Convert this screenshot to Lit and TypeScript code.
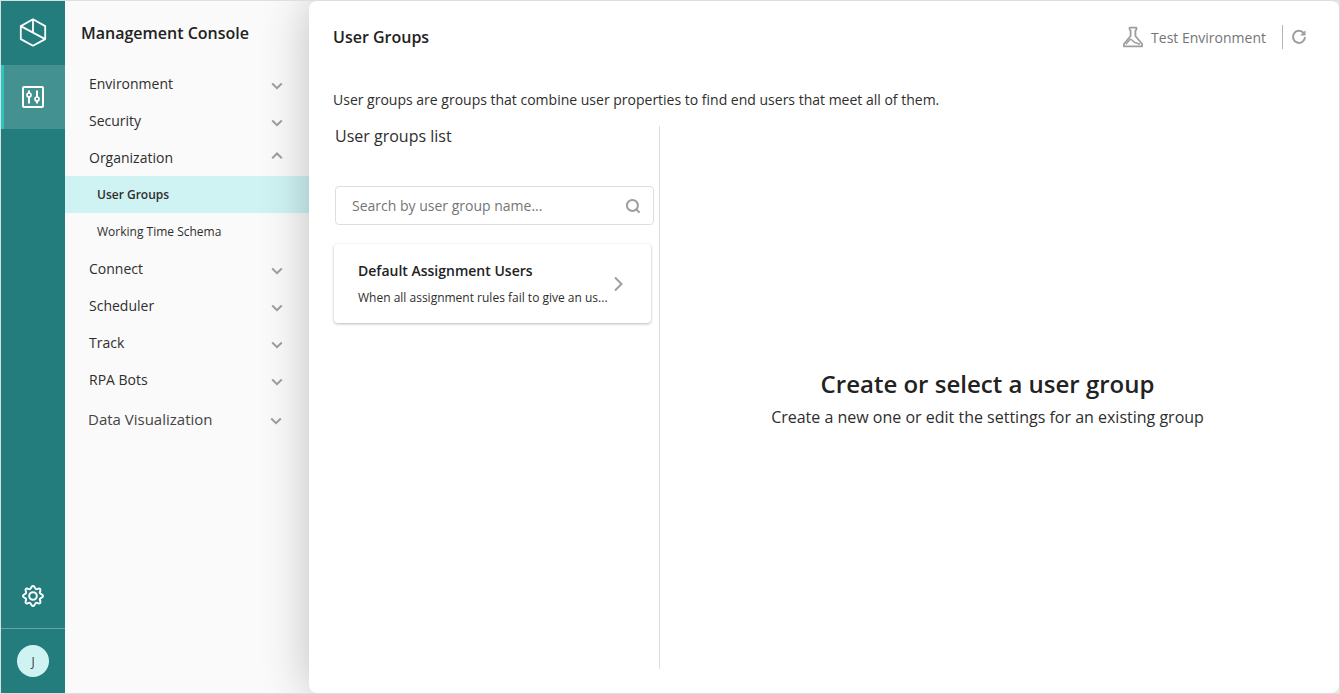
import { LitElement, html, css, svg, nothing } from "lit";
import { customElement, property, state } from "lit/decorators.js";
import { classMap } from "lit/directives/class-map.js";

interface Section {
  label: string;
  children?: string[];
}

const SECTIONS: Section[] = [
  { label: "Environment" },
  { label: "Security" },
  { label: "Organization", children: ["User Groups", "Working Time Schema"] },
  { label: "Connect" },
  { label: "Scheduler" },
  { label: "Track" },
  { label: "RPA Bots" },
  { label: "Data Visualization" },
];

const chevronDown = html`<svg width="12" height="8" viewBox="0 0 12 8" fill="none" stroke="currentColor" stroke-width="2">
  ${svg`<path d="M1.2 1.5 6 6.2 10.8 1.5" />`}
</svg>`;

const chevronUp = html`<svg width="12" height="8" viewBox="0 0 12 8" fill="none" stroke="currentColor" stroke-width="2">
  ${svg`<path d="M1.2 6.2 6 1.5 10.8 6.2" />`}
</svg>`;

@customElement("side-rail")
export class SideRail extends LitElement {
  static styles = css`
    :host {
      display: flex;
      flex-direction: column;
      width: 64px;
      flex: none;
      background: #237d7d;
      color: #fff;
    }
    .cell {
      display: flex;
      align-items: center;
      justify-content: center;
      height: 64px;
      width: 100%;
      box-sizing: border-box;
      padding: 0;
      border: 0;
      background: none;
      color: inherit;
      font: inherit;
      cursor: pointer;
    }
    .active {
      background: #449191;
      box-shadow: inset 3px 0 0 #2ec4c4;
    }
    .spacer {
      flex: 1;
    }
    .account {
      height: 65px;
      border-top: 1px solid #65a4a4;
    }
    .avatar {
      display: flex;
      align-items: center;
      justify-content: center;
      width: 32px;
      height: 32px;
      border-radius: 50%;
      background: #cff3f3;
      color: #3a3a3a;
      font-size: 12px;
    }
  `;

  render() {
    return html`
      <a class="cell" href="#home" aria-label="Home">
        <svg width="28" height="30" viewBox="0 0 28 30" fill="none" stroke="#fff" stroke-width="1.8" stroke-linejoin="round">
          <path d="M14 1.3 26.2 8.1V21.1L14 27.7 1.8 21.1V8.1ZM14 1.3V14.7M1.8 8.1 26.2 21.1" />
        </svg>
      </a>
      <a class="cell active" href="#console" aria-label="Management Console">
        <svg width="22" height="22" viewBox="0 0 22 22" fill="none" stroke="#fff" stroke-width="2">
          <rect x="1" y="1" width="20" height="20" rx="1" />
          <path d="M7 4.5V7M7 11V17.5M15 4.5V11M15 15V17.5" />
          <circle cx="7" cy="9" r="2" stroke-width="1.7" />
          <circle cx="15" cy="13" r="2" stroke-width="1.7" />
        </svg>
      </a>
      <span class="spacer"></span>
      <button class="cell" type="button" aria-label="Settings">
        <svg width="24" height="24" viewBox="0 0 24 24" fill="none" stroke="#fff" stroke-width="2" stroke-linejoin="round">
          <path
            d="M12 2C14 2 13.7 4.6 15 5.1 16.3 5.7 17.7 3.5 19.1 4.9 20.5 6.3 18.3 7.7 18.9 9 19.4 10.3 22 10 22 12 22 14 19.4 13.7 18.9 15 18.3 16.3 20.5 17.7 19.1 19.1 17.7 20.5 16.3 18.3 15 18.9 13.7 19.4 14 22 12 22 10 22 10.3 19.4 9 18.9 7.7 18.3 6.3 20.5 4.9 19.1 3.5 17.7 5.7 16.3 5.1 15 4.6 13.7 2 14 2 12 2 10 4.6 10.3 5.1 9 5.7 7.7 3.5 6.3 4.9 4.9 6.3 3.5 7.7 5.7 9 5.1 10.3 4.6 10 2 12 2Z"
          />
          <circle cx="12" cy="12" r="3.8" />
        </svg>
      </button>
      <button class="cell account" type="button" aria-label="Account">
        <span class="avatar">J</span>
      </button>
    `;
  }
}

@customElement("console-nav")
export class ConsoleNav extends LitElement {
  @property() current = "User Groups";
  @state() private open = "Organization";

  static styles = css`
    :host {
      display: block;
      width: 244px;
      flex: none;
      background: #fafafa;
      color: #2e2e2e;
    }
    .title {
      margin: 0;
      padding: 20px 16px;
      font-size: 16px;
      line-height: 24px;
      font-weight: 600;
      color: #222;
    }
    ul {
      list-style: none;
      margin: 0;
      padding: 0;
    }
    .section {
      display: flex;
      align-items: center;
      justify-content: space-between;
      width: 100%;
      height: 37px;
      padding: 0 26px 0 24px;
      border: 0;
      background: none;
      color: inherit;
      font: inherit;
      font-size: 14px;
      cursor: pointer;
    }
    .section.last {
      height: 42px;
      padding: 0 27px 0 23px;
      font-size: 15px;
      color: #444;
    }
    .section svg {
      color: #9e9e9e;
      margin-top: 4px;
    }
    .section.open svg {
      margin: 0 0 4px;
    }
    .link {
      display: block;
      height: 37px;
      line-height: 37px;
      padding: 0 32px;
      font-size: 12px;
      color: inherit;
      text-decoration: none;
    }
    .link.current {
      background: #cff3f3;
      font-weight: 600;
    }
  `;

  private toggle(label: string) {
    this.open = this.open === label ? "" : label;
  }

  render() {
    return html`
      <h2 class="title">Management Console</h2>
      <ul>
        ${SECTIONS.map((s, i) => {
          const open = s.label === this.open;
          return html`<li>
            <button
              type="button"
              class=${classMap({ section: true, open, last: i === SECTIONS.length - 1 })}
              aria-expanded=${open ? "true" : "false"}
              @click=${() => this.toggle(s.label)}
            >
              <span>${s.label}</span>${open ? chevronUp : chevronDown}
            </button>
            ${open && s.children
              ? html`<ul>
                  ${s.children.map(
                    (c) => html`<li><a class=${classMap({ link: true, current: c === this.current })} href="#">${c}</a></li>`
                  )}
                </ul>`
              : nothing}
          </li>`;
        })}
      </ul>
    `;
  }
}

@customElement("user-groups-page")
export class UserGroupsPage extends LitElement {
  static styles = css`
    :host {
      display: flex;
      flex-direction: column;
      flex: 1;
      min-width: 0;
      box-sizing: border-box;
      padding: 0 24px 24px;
      background: #fff;
      border-radius: 8px;
      box-shadow: 0 0 48px rgba(0, 0, 0, 0.24);
      color: #2e2e2e;
    }
    header {
      display: flex;
      align-items: center;
      justify-content: space-between;
      height: 72px;
    }
    h1 {
      margin: 0;
      font-size: 16px;
      font-weight: 600;
      color: #222;
    }
    .tools {
      display: flex;
      align-items: center;
      color: #757575;
      font-size: 14px;
    }
    .tools svg {
      color: #9e9e9e;
    }
    .env {
      display: flex;
      align-items: center;
      gap: 8px;
      padding-right: 16px;
      border-right: 1px solid #b5b5b5;
      height: 24px;
    }
    .icon-button {
      display: flex;
      padding: 8px;
      border: 0;
      background: none;
      cursor: pointer;
    }
    .intro {
      margin: 0;
      padding: 16px 0;
      font-size: 14px;
      line-height: 21px;
    }
    .body {
      display: flex;
      flex: 1;
      min-height: 0;
    }
    .list {
      width: 321px;
      flex: none;
      padding-right: 5px;
      border-right: 1px solid #dedede;
    }
    .list h2 {
      margin: 0 0 40px;
      padding-left: 2px;
      font-size: 16px;
      font-weight: 400;
      line-height: 20px;
    }
    .search {
      display: flex;
      align-items: center;
      box-sizing: border-box;
      height: 39px;
      margin: 0 0 19px 2px;
      padding: 0 12px 0 16px;
      border: 1px solid #dedede;
      border-radius: 4px;
      color: #9e9e9e;
    }
    .search:focus-within {
      border-color: #237d7d;
    }
    .search input {
      flex: 1;
      min-width: 0;
      padding: 0;
      border: 0;
      outline: 0;
      background: none;
      font: inherit;
      font-size: 14px;
      color: #2e2e2e;
    }
    .search input::placeholder {
      color: #757575;
      opacity: 1;
    }
    .card {
      display: flex;
      align-items: center;
      justify-content: space-between;
      box-sizing: border-box;
      width: 317px;
      height: 79px;
      margin-left: 1px;
      padding: 0 26px 0 24px;
      border: 0;
      border-radius: 4px;
      background: #fff;
      box-shadow: 0 1px 3px rgba(0, 0, 0, 0.28);
      font: inherit;
      color: inherit;
      text-align: left;
      cursor: pointer;
    }
    .text {
      display: flex;
      flex-direction: column;
      gap: 7px;
      padding-top: 2px;
      min-width: 0;
    }
    .name {
      font-size: 14px;
      line-height: 20px;
      font-weight: 600;
      color: #222;
    }
    .description {
      white-space: nowrap;
      font-size: 12px;
      line-height: 20px;
    }
    .card svg {
      flex: none;
      color: #9e9e9e;
    }
    .empty {
      display: flex;
      flex: 1;
      flex-direction: column;
      align-items: center;
      justify-content: center;
      gap: 6px;
      text-align: center;
    }
    .empty h2 {
      margin: 0;
      font-size: 24px;
      line-height: 33px;
      font-weight: 600;
      color: #222;
    }
    .empty p {
      margin: 0;
      font-size: 16px;
      line-height: 22px;
    }
  `;

  render() {
    return html`
      <header>
        <h1>User Groups</h1>
        <div class="tools">
          <span class="env">
            <svg width="20" height="22" viewBox="0 0 20 22" fill="none" stroke="currentColor" stroke-width="1.8" stroke-linejoin="round">
              <path d="M6.6 1.7H13.4V3.6L12.4 4.6V10L19.1 18V20.3H0.9V18L7.6 10V4.6L6.6 3.6Z" />
              <path d="M2.8 18.2 7.2 13.2C9.2 13.2 9.8 15.8 12.6 16.8L17 18.2" stroke-width="1.5" />
            </svg>
            Test Environment
          </span>
          <button class="icon-button" type="button" aria-label="Refresh">
            <svg width="16" height="16" viewBox="0 0 16 16" fill="none" stroke="currentColor" stroke-width="2">
              <path d="M12.6 4A6 6 0 1 0 14 8" />
              <path d="M14.5 1.2V6.6H9.1Z" fill="currentColor" stroke="none" />
            </svg>
          </button>
        </div>
      </header>
      <p class="intro">User groups are groups that combine user properties to find end users that meet all of them.</p>
      <div class="body">
        <section class="list">
          <h2>User groups list</h2>
          <label class="search">
            <input type="text" aria-label="Search by user group name" placeholder="Search by user group name..." />
            <svg width="16" height="16" viewBox="0 0 16 16" fill="none" stroke="currentColor" stroke-width="2">
              <circle cx="7.4" cy="7.4" r="5.5" />
              <path d="M11.2 11.2 14.6 14.6" />
            </svg>
          </label>
          <button class="card" type="button">
            <span class="text">
              <span class="name">Default Assignment Users</span>
              <span class="description">When all assignment rules fail to give an us...</span>
            </span>
            <svg width="12" height="16" viewBox="0 0 12 16" fill="none" stroke="currentColor" stroke-width="2">
              <path d="M2 1.5 8.5 8 2 14.5" />
            </svg>
          </button>
        </section>
        <section class="empty">
          <h2>Create or select a user group</h2>
          <p>Create a new one or edit the settings for an existing group</p>
        </section>
      </div>
    `;
  }
}

@customElement("app-root")
export class AppRoot extends LitElement {
  static styles = css`
    :host {
      display: flex;
      box-sizing: border-box;
      min-height: 100vh;
      overflow: hidden;
      border: 1px solid #dedede;
      background: #fafafa;
      font-family: "Open Sans", "Noto Sans", sans-serif;
    }
  `;

  render() {
    return html`
      <side-rail></side-rail>
      <console-nav></console-nav>
      <user-groups-page></user-groups-page>
    `;
  }
}
